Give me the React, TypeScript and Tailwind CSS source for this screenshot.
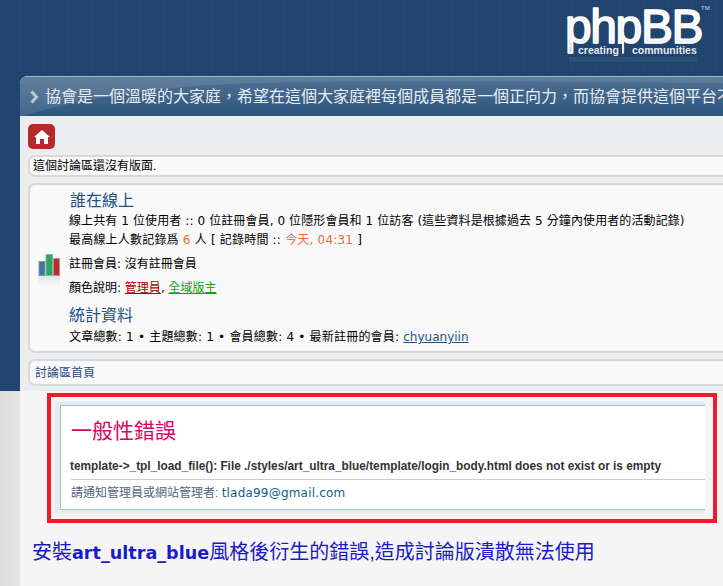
const cjk = "font-['Liberation_Sans','Noto_Sans_CJK_TC',sans-serif]";
const dv = "font-['DejaVu_Sans','Noto_Sans_CJK_TC',sans-serif]";
const texture = "bg-[#1f4570] bg-[repeating-linear-gradient(90deg,rgba(255,255,255,0.025)_0px,rgba(255,255,255,0.025)_1px,transparent_1px,transparent_3px),repeating-linear-gradient(0deg,rgba(0,0,0,0.05)_0px,rgba(0,0,0,0.05)_1px,transparent_1px,transparent_2px)]";

function Logo() {
  return (
    <svg width="160" height="68" viewBox="0 0 160 68" className="block">
      <defs>
        <linearGradient id="lg" x1="0" y1="0" x2="0" y2="1">
          <stop offset="0" stopColor="#ffffff" />
          <stop offset="0.75" stopColor="#f4f4f4" />
          <stop offset="1" stopColor="#c8ccd2" />
        </linearGradient>
      </defs>
      <text x="4" y="43" fontFamily="Liberation Sans" fontSize="48" fill="url(#lg)" stroke="#ffffff" strokeWidth="1.6" strokeLinejoin="round" letterSpacing="-1.4">phpBB</text>
      <rect x="15" y="44" width="46" height="14" fill="#1f4570" />
      <rect x="70" y="44" width="70" height="14" fill="#1f4570" />
      <text x="17" y="54" fontFamily="Liberation Sans" fontSize="10.5" fontWeight="700" fill="#e6eaee">creating</text>
      <text x="71" y="54" fontFamily="Liberation Sans" fontSize="10.5" fontWeight="700" fill="#e6eaee">communities</text>
      <rect x="8" y="57" width="128" height="5" fill="#ffffff" opacity="0.06" />
      <text x="140" y="9.5" fontFamily="Liberation Sans" fontSize="6" fill="#cfd6dd">TM</text>
    </svg>
  );
}

function Bars() {
  return (
    <svg width="24" height="36" viewBox="0 0 24 36" className="block">
      <defs>
        <linearGradient id="fade" x1="0" y1="0" x2="0" y2="1">
          <stop offset="0" stopColor="#7f8f9f" stopOpacity="0.2" />
          <stop offset="1" stopColor="#7f8f9f" stopOpacity="0" />
        </linearGradient>
      </defs>
      <rect x="1" y="7.5" width="6" height="14" fill="#4a7199" stroke="#7a97b5" />
      <rect x="8" y="0.5" width="6.5" height="21" fill="#2ea267" stroke="#74c497" />
      <rect x="15.5" y="4.5" width="6" height="17" fill="#b5302f" stroke="#d08886" />
      <rect x="0.5" y="22" width="21.5" height="11" fill="url(#fade)" />
    </svg>
  );
}

export default function App() {
  return (
    <div className={`w-[723px] h-[586px] overflow-hidden flex flex-col bg-[#f5f5f5] ${cjk}`}>
      <div className={`h-[391px] shrink-0 flex flex-col pl-[20px] ${texture}`}>
        <header className="h-[76px] shrink-0 flex justify-end pr-[2px]">
          <Logo />
        </header>
        <div className="flex-1 min-h-0 flex flex-col overflow-hidden rounded-tl-[8px] bg-[#ecedef]">
          <div className="relative h-[40px] shrink-0 flex items-center overflow-hidden border-t border-[#9eb0c2] bg-[linear-gradient(180deg,#4f7093,#2f5680)] whitespace-nowrap">
            <svg className="absolute left-0 top-0" width="703" height="40" viewBox="0 0 703 40">
              <path d="M0 40 L0 0 L703 0 L703 6 C420 4 260 2 165 10 C95 16 45 26 0 40Z" fill="#ffffff" opacity="0.1" />
            </svg>
            <svg className="relative ml-[10px] shrink-0" width="9" height="14" viewBox="0 0 9 14">
              <path d="M1.5 1.5 L6.5 7 L1.5 12.5" fill="none" stroke="#bccad7" strokeWidth="3" />
            </svg>
            <span className="relative ml-[6px] text-[16px] leading-none text-[#e8edf2]">協會是一個溫暖的大家庭，希望在這個大家庭裡每個成員都是一個正向力，而協會提供這個平台不</span>
          </div>
          <div className="flex-1 flex flex-col pl-[8px] pt-[8px]">
            <div className="w-[27px] h-[25px] rounded-[5px] bg-[#b42b2e] flex items-center justify-center">
              <svg width="16" height="14" viewBox="0 0 16 14">
                <path d="M8 0 L16 7 L14 7 L14 14 L10 14 L10 9 L6 9 L6 14 L2 14 L2 7 L0 7 Z" fill="#ffffff" />
              </svg>
            </div>
            <div className="mt-[6px] h-[22px] w-[720px] flex items-center pl-[3px] rounded-l-[7px] border-y-2 border-l-2 border-[#d6d8da] bg-[#f9f9f9] text-[12px] text-black">
              這個討論區還沒有版面.
            </div>
            <div className={`mt-[6px] h-[170px] w-[720px] flex rounded-l-[7px] border-y-2 border-l-2 border-[#d6d8da] bg-[#f9f9f9] text-[12px] text-black ${dv}`}>
              <div className="w-[39px] shrink-0 pl-[8px] pt-[69px]">
                <Bars />
              </div>
              <div className="pt-[5px] flex flex-col whitespace-nowrap">
                <h2 className="h-[21px] pl-[1px] text-[16px] font-normal leading-[21px] text-[#1f5088]">誰在線上</h2>
                <p className="mt-[1px] h-[19px] leading-[19px] tracking-[0.1px]">線上共有 1 位使用者 :: 0 位註冊會員, 0 位隱形會員和 1 位訪客 (這些資料是根據過去 5 分鐘內使用者的活動記錄)</p>
                <p className="h-[19px] leading-[19px] tracking-[0.2px]">最高線上人數記錄爲 <span className="text-[#f26a35]">6</span> 人 [ 記錄時間 :: <span className="text-[#f26a35]">今天, 04:31</span> ]</p>
                <p className="mt-[5px] h-[19px] leading-[19px]">註冊會員: 沒有註冊會員</p>
                <p className="mt-[5px] h-[19px] leading-[19px]">顏色說明: <a className="text-[#aa0000] underline">管理員</a>, <a className="text-[#00aa00] underline">全域版主</a></p>
                <h2 className="mt-[7px] h-[21px] text-[16px] font-normal leading-[21px] text-[#1f5088]">統計資料</h2>
                <p className="mt-[2px] h-[19px] leading-[19px] tracking-[0.2px]">文章總數: 1 • 主題總數: 1 • 會員總數: 4 • 最新註冊的會員: <a className="text-[#1d5488] underline tracking-normal">chyuanyiin</a></p>
              </div>
            </div>
            <div className="mt-[6px] h-[27px] w-[720px] flex items-center pl-[5px] rounded-l-[7px] border-y-2 border-l-2 border-[#d6d8da] bg-[#f9f9f9] text-[12px] text-[#1f4f80]">
              討論區首頁
            </div>
          </div>
        </div>
      </div>
      <div className="flex-1 flex">
        <div className="w-[20px] shrink-0 bg-[linear-gradient(90deg,#dcdcdc,#e4e4e4)]" />
        <div className="flex-1 flex flex-col pl-[27px] pt-[2px]">
          <div className="w-[670px] h-[130px] border-4 border-[#ee1c2b] pl-[4px] pt-[5px] pr-[8px]">
            <div className="h-[111px] bg-[#e3ecf0] pl-[5px] py-[3px]">
              <div className="h-[105px] bg-white border-y border-l border-[#a9bccb] pl-[10px] flex flex-col whitespace-nowrap">
                <h1 className="mt-[11px] h-[28px] text-[21px] leading-[28px] font-normal text-[#d9045f]">一般性錯誤</h1>
                <p className="mt-[13px] ml-[-1px] h-[16px] text-[11.85px] leading-[16px] font-bold text-[#333333]">template-&gt;_tpl_load_file(): File ./styles/art_ultra_blue/template/login_body.html does not exist or is empty</p>
                <div className="mt-[5px] border-t border-[#cccccc] pt-[5px] text-[12px] leading-[17px] text-[#536482]">
                  請通知管理員或網站管理者: <a className={`text-[#105f89] tracking-[0.2px] ${dv}`}>tlada99@gmail.com</a>
                </div>
              </div>
            </div>
          </div>
          <p className={`ml-[-15px] mt-[16px] text-[20px] leading-[26px] text-[#1a1ac8] whitespace-nowrap ${cjk}`}>
            安裝<b className={`font-bold text-[17.6px] ${dv}`}>art_ultra_blue</b>風格後衍生的錯誤,造成討論版潰散無法使用
          </p>
        </div>
      </div>
    </div>
  );
}
